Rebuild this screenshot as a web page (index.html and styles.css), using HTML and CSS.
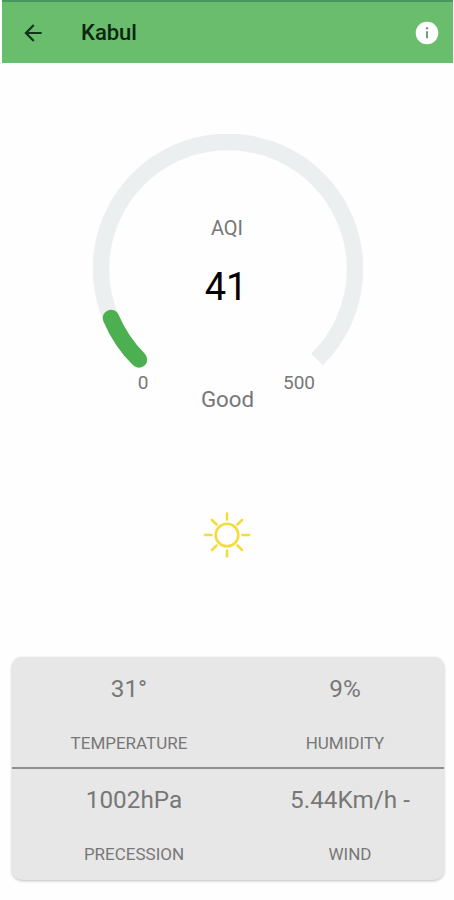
FILE: index.html
```html
<!DOCTYPE html>
<html lang="en">
<head>
  <meta charset="UTF-8">
  <meta name="viewport" content="width=device-width, initial-scale=1.0">
  <title>Kabul</title>
  <link rel="stylesheet" href="styles.css">
</head>
<body>
  <header class="app-bar">
    <svg class="back" viewBox="0 0 24 24" width="26" height="26">
      <path d="M20 11H7.83l5.59-5.59L12 4l-8 8 8 8 1.41-1.41L7.83 13H20z" fill="#12351a"/>
    </svg>
    <h1>Kabul</h1>
    <svg class="info" viewBox="0 0 24 24" width="24" height="24">
      <circle cx="12" cy="12" r="11.3" fill="#fff"/>
      <circle cx="12" cy="7.2" r="1.2" fill="#6f9c77"/>
      <path d="M12 10.2v7" stroke="#6f9c77" stroke-width="2"/>
    </svg>
  </header>

  <main>
    <section class="gauge">
      <svg class="dial" viewBox="0 0 270 236" width="270" height="236">
        <path class="track" d="M46 225.5A127 127 0 1 1 224 225.5"/>
        <path class="progress" d="M46 225.5A127 127 0 0 1 18 184"/>
      </svg>
      <div class="readout">
        <span class="name">AQI</span>
        <span class="value">41</span>
      </div>
    </section>
    <div class="scale">
      <span class="min">0</span>
      <span class="status">Good</span>
      <span class="max">500</span>
    </div>

    <svg class="weather" viewBox="0 0 48 48" width="48" height="48">
      <circle cx="24" cy="24" r="11.3"/>
      <path d="M24 2.5v6M24 39.5v6M2 24h6.5M39.5 24h6.5M9 9l4.5 4.5M34.5 34.5l4.5 4.5M9 39l4.5-4.5M34.5 13.5l4.5-4.5"/>
    </svg>

    <section class="card">
      <div class="row">
        <div class="cell">
          <span class="reading">31°</span>
          <span class="label">TEMPERATURE</span>
        </div>
        <div class="cell">
          <span class="reading">9%</span>
          <span class="label">HUMIDITY</span>
        </div>
      </div>
      <div class="row">
        <div class="cell">
          <span class="reading">1002hPa</span>
          <span class="label">PRECESSION</span>
        </div>
        <div class="cell">
          <span class="reading">5.44Km/h -</span>
          <span class="label">WIND</span>
        </div>
      </div>
    </section>
  </main>
</body>
</html>
```
FILE: styles.css
```css
* {
  box-sizing: border-box;
}
body {
  margin: 0;
  height: 900px;
  background: #fefefe;
  font-family: Roboto, sans-serif;
  color: #777;
}
.app-bar {
  display: flex;
  align-items: center;
  height: 63px;
  margin: 0 1px 0 2px;
  padding: 0 14px 0 18px;
  background: #69bd6c;
  border-top: 2px solid #489760;
}
.app-bar h1 {
  flex: 1;
  margin: 0 0 0 35px;
  font-size: 22px;
  font-weight: 500;
  color: #0c2610;
}
main {
  display: flex;
  flex-direction: column;
}
.gauge {
  display: grid;
  width: 270px;
  margin: 71px 0 0 93px;
}
.dial, .readout {
  grid-area: 1 / 1;
}
.dial path {
  fill: none;
  stroke-width: 16.5;
}
.dial .track {
  stroke: #ebeff0;
}
.dial .progress {
  stroke: #4caf50;
  stroke-linecap: round;
}
.readout {
  display: flex;
  flex-direction: column;
  align-items: center;
  padding: 82px 2px 0 0;
}
.name {
  font-size: 20px;
  line-height: 24px;
}
.value {
  margin-top: 25px;
  padding-right: 2px;
  font-size: 38px;
  line-height: 44px;
  color: #000;
}
.scale {
  display: grid;
  grid-template-columns: 40px 1fr 40px;
  width: 196px;
  margin-left: 123px;
  font-size: 19px;
  line-height: 26px;
  text-align: center;
}
.status {
  padding: 15px 0 0 13px;
  font-size: 22.3px;
  line-height: 28px;
}
.weather {
  margin: 98px 0 0 203px;
  fill: none;
  stroke: #f3dc3c;
  stroke-width: 2.6;
  stroke-linecap: round;
}
.card {
  height: 223px;
  margin: 98px 10px 0 12px;
  background: #e7e7e7;
  border-radius: 10px;
  box-shadow: 0 1px 3px rgba(0, 0, 0, 0.25);
}
.row {
  display: flex;
  height: 110px;
  padding-left: 9px;
}
.row + .row {
  padding-left: 14px;
  border-top: 2px solid #8e8e8e;
}
.cell {
  display: flex;
  flex: 0 0 216px;
  flex-direction: column;
  align-items: center;
  padding-top: 18px;
}
.row + .row .cell {
  padding-top: 17px;
}
.reading {
  font-size: 24.3px;
  line-height: 28px;
}
.label {
  margin-top: 30px;
  font-size: 17px;
  line-height: 20px;
}
```
